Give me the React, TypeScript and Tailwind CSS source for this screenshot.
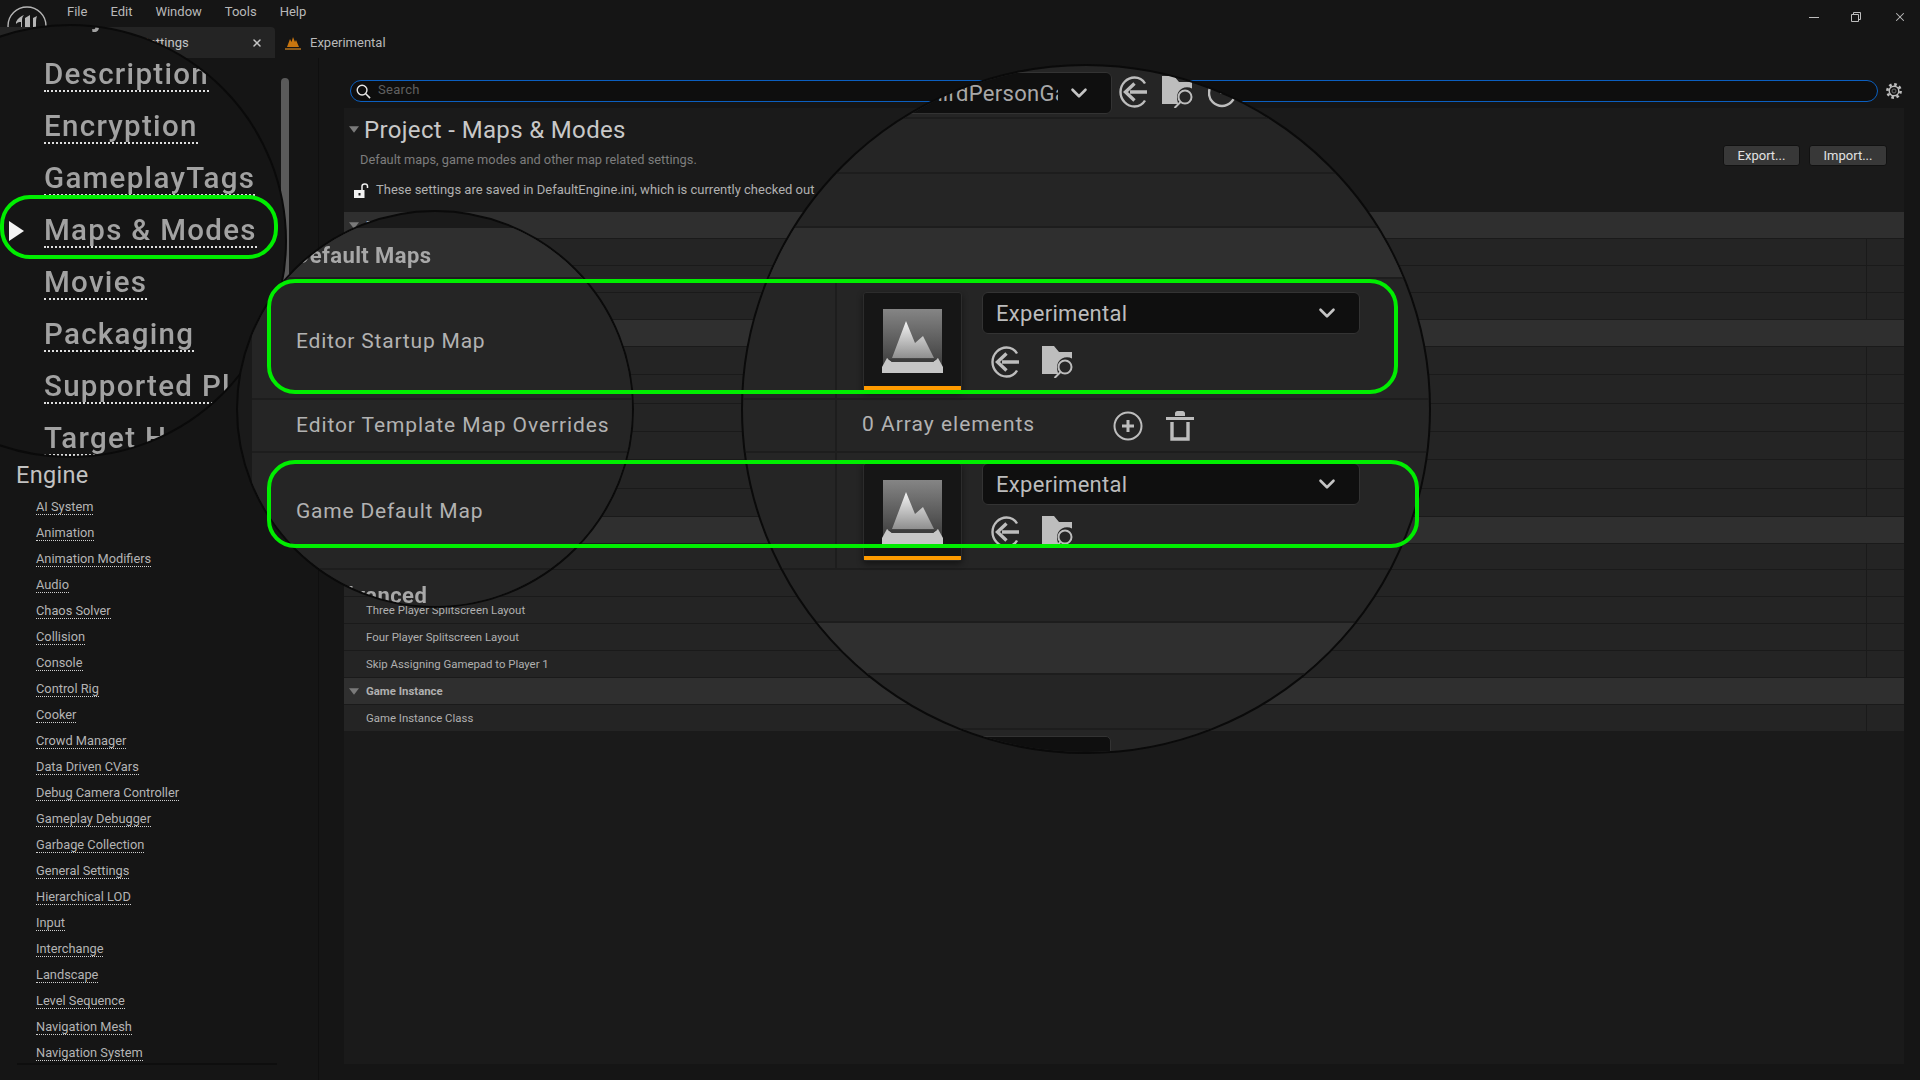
import { ChevronDown, X } from 'lucide-react';

const menus = ['File', 'Edit', 'Window', 'Tools', 'Help'];

const engineLinks = [
  'AI System', 'Animation', 'Animation Modifiers', 'Audio', 'Chaos Solver', 'Collision', 'Console', 'Control Rig',
  'Cooker', 'Crowd Manager', 'Data Driven CVars', 'Debug Camera Controller', 'Gameplay Debugger', 'Garbage Collection',
  'General Settings', 'Hierarchical LOD', 'Input', 'Interchange', 'Landscape', 'Level Sequence', 'Navigation Mesh',
  'Navigation System',
];

const zoomedLinks = ['Description', 'Encryption', 'GameplayTags', 'Maps & Modes', 'Movies', 'Packaging', 'Supported Platforms', 'Target Hardware'];

const rows = [
  { h: 'h-[27px]', label: 'Default Maps', header: true },
  { h: 'h-[27px]', label: '' },
  { h: 'h-[27px]', label: '' },
  { h: 'h-[27px]', label: '' },
  { h: 'h-[27px]', label: '', header: true },
  { h: 'h-[28px]', label: '' },
  { h: 'h-[29px]', label: '' },
  { h: 'h-[28px]', label: '' },
  { h: 'h-[28px]', label: '' },
  { h: 'h-[29px]', label: '' },
  { h: 'h-[28px]', label: '' },
  { h: 'h-[27px]', label: '', header: true },
  { h: 'h-[26px]', label: '' },
  { h: 'h-[27px]', label: '' },
  { h: 'h-[27px]', label: 'Three Player Splitscreen Layout' },
  { h: 'h-[27px]', label: 'Four Player Splitscreen Layout' },
  { h: 'h-[27px]', label: 'Skip Assigning Gamepad to Player 1' },
  { h: 'h-[27px]', label: 'Game Instance', header: true },
  { h: 'h-[27px]', label: 'Game Instance Class' },
];

function Caret({ className }: { className: string }) {
  return (
    <svg viewBox="0 0 12 8" className={className}>
      <path d="M0 0h12L6 8z" fill="#7a7a7a" />
    </svg>
  );
}

function UnrealLogo() {
  return (
    <svg viewBox="0 0 40 40" className="w-[40px] h-[40px]">
      <circle cx="20" cy="20" r="19" fill="none" stroke="#b5b5b5" strokeWidth="1.4" />
      <path d="M9 16c2-4 5-6 8-7-2 2-2 4-2 6v9c0 2 2 2 3 1V12l5-3v15c1 1 2 1 3 0V12l4-2c-1 3-1 5-1 8v9l-4 4-3-2-3 2-5-3v-12c-2 0-3 0-5 2z" fill="#b5b5b5" />
    </svg>
  );
}

function MapTabIcon() {
  return (
    <svg viewBox="0 0 16 14" className="w-[16px] h-[14px]">
      <path d="M2 11 5 3l1.5 3L8 1l2 5 1-2 3 7z" fill="#c9760f" />
      <path d="M0 12h16v2H0z" fill="#8a5a1c" />
    </svg>
  );
}

function LockIcon() {
  return (
    <svg viewBox="0 0 15 15" className="w-[15px] h-[15px]">
      <path d="M0 7h10.5v8H0z" fill="#f2f2f2" />
      <path d="M4.5 10h2v2.5h-2z" fill="#1a1a1a" />
      <path d="M8 7V3.2C8 1.8 9 1 10.8 1s2.7.8 2.7 2.2V5" fill="none" stroke="#f2f2f2" strokeWidth="1.5" />
    </svg>
  );
}

function GearIcon() {
  return (
    <svg viewBox="0 0 16 16" className="w-[16px] h-[16px]">
      <circle cx="8" cy="8" r="6.6" fill="none" stroke="#bdbdbd" strokeWidth="2.6" strokeDasharray="2.6 2.58" />
      <circle cx="8" cy="8" r="4.8" fill="none" stroke="#bdbdbd" strokeWidth="1.4" />
      <circle cx="8" cy="8" r="2" fill="none" stroke="#6a6a6a" strokeWidth="1" />
    </svg>
  );
}

function SearchIcon() {
  return (
    <svg viewBox="0 0 16 16" className="w-[15px] h-[15px]">
      <circle cx="6.5" cy="6.5" r="5.2" fill="none" stroke="#e6e6e6" strokeWidth="1.5" />
      <path d="m10.4 10.4 4.6 4.6" stroke="#e6e6e6" strokeWidth="1.7" />
    </svg>
  );
}

function BackIcon() {
  return (
    <svg viewBox="0 0 29 32" className="w-[29px] h-[32px] shrink-0">
      <path d="M26 7.5C23.6 3.5 19.6 1.5 15.5 1.5 8 1.5 1.5 8 1.5 16s6.500 14.500 14 14.500c4.100 0 8.100-2 10.500-6" fill="none" stroke="#bdbdbd" strokeWidth="2.400" />
      <path d="M28 16H11" stroke="#bdbdbd" strokeWidth="3.400" />
      <path d="M15.500 7.500 6.500 16l9 8.500" fill="none" stroke="#bdbdbd" strokeWidth="3.400" />
    </svg>
  );
}

function FolderSearchIcon() {
  return (
    <svg viewBox="0 0 32 32" className="w-[32px] h-[32px] shrink-0">
      <path d="M0 0h12l5 6h13v6.500a10 10 0 0 0-15 8.500c0 2.500.5 5 1.500 7H0z" fill="#bdbdbd" />
      <circle cx="23" cy="21" r="6.500" fill="none" stroke="#bdbdbd" strokeWidth="2" />
      <path d="m18.500 26-6 6" stroke="#bdbdbd" strokeWidth="2" />
    </svg>
  );
}

function ResetIcon() {
  return (
    <svg viewBox="0 0 28 32" className="w-[28px] h-[32px] shrink-0">
      <circle cx="14" cy="17" r="13" fill="none" stroke="#bdbdbd" strokeWidth="2.400" />
      <path d="M14 10v8" stroke="#bdbdbd" strokeWidth="3" />
    </svg>
  );
}

function PlusCircleIcon() {
  return (
    <svg viewBox="0 0 30 30" className="w-[30px] h-[30px]">
      <circle cx="15" cy="15" r="13.500" fill="none" stroke="#bdbdbd" strokeWidth="2" />
      <path d="M15 9v12M9 15h12" stroke="#bdbdbd" strokeWidth="3" />
    </svg>
  );
}

function TrashIcon() {
  return (
    <svg viewBox="0 0 28 30" className="w-[28px] h-[30px]">
      <path d="M0 6h28v3H0zM9 2.500C9 1 10 0 11.500 0h5C18 0 19 1 19 2.500V5H9z" fill="#bdbdbd" />
      <path d="M6 11v17h16V11" fill="none" stroke="#bdbdbd" strokeWidth="3.400" />
    </svg>
  );
}

function MapThumb({ id, height }: { id: string; height: string }) {
  return (
    <div className={`relative w-[99px] ${height} shrink-0 bg-[#161616] rounded-[3px] border border-[#2c2c2c] shadow-[0_3px_6px_rgba(0,0,0,0.45)] flex justify-center pt-[16px]`}>
      <svg viewBox="0 0 61 64" className="w-[61px] h-[64px]">
        <defs>
          <linearGradient id={`${id}-sky`} x1="0" y1="0" x2="0" y2="1">
            <stop offset="0" stopColor="#858585" />
            <stop offset="1" stopColor="#3c3c3c" />
          </linearGradient>
          <linearGradient id={`${id}-peak`} x1="0" y1="0" x2="0" y2="1">
            <stop offset="0" stopColor="#f5f5f5" />
            <stop offset="1" stopColor="#8f8f8f" />
          </linearGradient>
        </defs>
        <path d="M1 0h59v58H1z" fill={`url(#${id}-sky)`} />
        <path d="M10 49 24 12l9 22 8-7 11 22z" fill={`url(#${id}-peak)`} />
        <path d="M0 58 5 49l5 4h41l5-4 5 9v6H0z" fill="#c6c6c6" />
        <path d="M6 50h49l-4 3H10z" fill="#3c3c3c" />
      </svg>
      <div className="absolute left-0 right-0 bottom-0 h-[4px] bg-[#ff9b00]" />
    </div>
  );
}

function MapDropdown({ width, text, textClass }: { width: string; text: string; textClass: string }) {
  return (
    <div className={`${width} h-[42px] shrink-0 bg-[#0f0f0f] rounded-[6px] border border-[#333333] flex items-center justify-between pr-[22px] overflow-hidden`}>
      <span className={`text-[22px] whitespace-nowrap ${textClass}`}>{text}</span>
      <ChevronDown className="w-[26px] h-[26px] text-[#c4c4c4] shrink-0 mr-[-3px]" strokeWidth={2.4} />
    </div>
  );
}

function MapPicker({ id, height, iconGap }: { id: string; height: string; iconGap: string }) {
  return (
    <div className="flex gap-[20px]">
      <MapThumb id={id} height={height} />
      <div className="flex flex-col">
        <MapDropdown width="w-[378px]" text="Experimental" textClass="pl-[13px] tracking-[0.3px] text-[#bcbcbc]" />
        <div className={`flex ${iconGap} pl-[9px] gap-[22px]`}>
          <BackIcon />
          <FolderSearchIcon />
        </div>
      </div>
    </div>
  );
}

// the three magnified call-outs sit on top of the settings page
function SidebarLens() {
  return (
    <div className="absolute left-[-147px] top-[24px] w-[434px] h-[434px] rounded-full overflow-hidden bg-[#151515] border-2 border-[#0a0a0a]">
      <div className="absolute left-[189px] top-[-34px] flex flex-col w-[400px]">
        <div className="h-[57px] pt-[8px]">
          <span className="text-[29.5px] font-medium leading-[32px] tracking-[1.3px] text-[#a2a2a2] blur-[0.5px]">Project</span>
        </div>
        {zoomedLinks.map((link) => (
          <div key={link} className="relative h-[52px] flex items-center">
            {link === 'Maps & Modes' && (
              <svg viewBox="0 0 15 20" className="absolute left-[-35px] top-[16px] w-[15px] h-[20px]">
                <path d="M0 0l15 10L0 20z" fill="#f4f4f4" />
              </svg>
            )}
            <span className="text-[29.5px] font-medium leading-[32px] tracking-[1.3px] text-[#a2a2a2] whitespace-nowrap border-b-2 border-dotted border-[#dedede] blur-[0.5px]">
              {link}
            </span>
          </div>
        ))}
      </div>
    </div>
  );
}

function LeftLens() {
  return (
    <div className="absolute left-[236px] top-[210px] w-[398px] h-[398px] rounded-full overflow-hidden bg-[#1a1a1a] border-2 border-[#0a0a0a]">
      <div className="ml-[14px] mt-[16px] w-[400px] flex flex-col bg-[#252525] text-[#b2b2b2]">
        <div className="h-[51px] flex items-center pl-[43px] pt-[5px] bg-[#2f2f2f] border-b-2 border-[#1d1d1d]">
          <span className="text-[22px] font-bold tracking-[0.4px] text-[#a8a8a8] blur-[0.4px]">Default Maps</span>
        </div>
        <div className="h-[121px] flex items-center pl-[44px] border-b-2 border-[#1d1d1d] pt-[7px]">
          <span className="text-[21px] tracking-[0.8px]">Editor Startup Map</span>
        </div>
        <div className="h-[53px] flex items-center pl-[44px] border-b-2 border-[#1d1d1d]">
          <span className="text-[21px] tracking-[0.9px] whitespace-nowrap">Editor Template Map Overrides</span>
        </div>
        <div className="h-[117px] flex items-center pl-[44px] border-b-2 border-[#1d1d1d] pt-[2px]">
          <span className="text-[21px] tracking-[0.8px]">Game Default Map</span>
        </div>
        <div className="h-[50px] flex items-center pl-[74px]">
          <span className="text-[22px] font-bold tracking-[0.4px] text-[#a8a8a8] blur-[0.4px]">Advanced</span>
        </div>
      </div>
    </div>
  );
}

function RightLens() {
  return (
    <div className="absolute left-[741px] top-[64px] w-[690px] h-[690px] rounded-full overflow-hidden bg-[#252525] border-2 border-[#0a0a0a]">
      <div className="flex flex-col w-[690px]">
        <div className="h-[53px] flex items-start pt-[6px] border-b-2 border-[#1d1d1d] justify-end pr-[198px] gap-[14px]">
          <div className="mr-[-7px]">
            <MapDropdown width="w-[300px]" text="ThirdPersonGameMode" textClass="w-[245px] shrink-0 overflow-hidden text-[#a8a8a8] tracking-[0.3px] pl-[104px]" />
          </div>
          <div className="flex gap-[14px] mr-[-1px] pt-[4px]">
            <BackIcon />
            <FolderSearchIcon />
            <ResetIcon />
          </div>
        </div>
        <div className="h-[55px] border-b-2 border-[#1d1d1d]" />
        <div className="h-[54px] border-b-2 border-[#1d1d1d]" />
        <div className="h-[51px] bg-[#2f2f2f] border-b-2 border-[#1d1d1d]" />
        <div className="h-[121px] flex border-b-2 border-[#1d1d1d]">
          <div className="w-[94px] border-r-2 border-[#1d1d1d]" />
          <div className="pl-[26px] pt-[13px]">
            <MapPicker id="startup" height="h-[99px]" iconGap="mt-[12px]" />
          </div>
        </div>
        <div className="h-[53px] flex border-b-2 border-[#1d1d1d]">
          <div className="w-[94px] border-r-2 border-[#1d1d1d]" />
          <div className="pl-[25px] flex items-center">
            <span className="text-[21px] tracking-[1px] text-[#b2b2b2] w-[251px] whitespace-nowrap mt-[-2px]">0 Array elements</span>
            <PlusCircleIcon />
            <div className="ml-[23px]">
              <TrashIcon />
            </div>
          </div>
        </div>
        <div className="h-[117px] flex border-b-2 border-[#1d1d1d]">
          <div className="w-[94px] border-r-2 border-[#1d1d1d]" />
          <div className="pl-[26px] pt-[10px]">
            <MapPicker id="game" height="h-[98px]" iconGap="mt-[11px]" />
          </div>
        </div>
        <div className="h-[53px] border-b-2 border-[#1d1d1d]" />
        <div className="h-[52px] bg-[#2f2f2f] border-b-2 border-[#1d1d1d]" />
        <div className="h-[55px] border-b-2 border-[#1d1d1d]" />
        <div className="h-[40px] pt-[6px] pl-[90px]">
          <div className="w-[278px] h-[40px] bg-[#0f0f0f] rounded-[5px] border border-[#333333]" />
        </div>
      </div>
    </div>
  );
}

export default function App() {
  return (
    <div className="relative w-[1920px] h-[1080px] overflow-hidden bg-[#151515] [font-family:Roboto,sans-serif] flex flex-col">
      {/* Title bar */}
      <div className="h-[27px] flex shrink-0">
        <div className="ml-[7px] mt-[6px]">
          <UnrealLogo />
        </div>
        <div className="ml-[20px] pt-[1px] flex gap-[23px] h-[23px] items-center text-[13px] text-[#b9b9b9]">
          {menus.map((menu) => (
            <span key={menu}>{menu}</span>
          ))}
        </div>
        <div className="ml-auto flex pr-[13px] items-start pt-[10px] gap-[32px]">
          <div className="w-[10px] h-[14px] flex items-center">
            <div className="w-[10px] h-px bg-[#bdbdbd]" />
          </div>
          <svg viewBox="0 0 10 10" className="w-[10px] h-[10px] mt-[2px]">
            <path d="M.5 2.500h7v7h-7zM2.500 2.500v-2h7v7h-2" fill="none" stroke="#bdbdbd" />
          </svg>
          <X className="w-[14px] h-[14px] text-[#bdbdbd]" strokeWidth={1.8} />
        </div>
      </div>

      {/* Tabs */}
      <div className="h-[31px] flex shrink-0">
        <div className="w-[275px] bg-[#242424] rounded-tr-[4px] flex items-center justify-between pl-[97px] pr-[12px]">
          <span className="text-[13px] text-[#c4c4c4]">Project Settings</span>
          <X className="w-[12px] h-[12px] text-[#c4c4c4]" strokeWidth={3} />
        </div>
        <div className="flex items-center pl-[10px] gap-[9px]">
          <MapTabIcon />
          <span className="text-[13px] text-[#b9b9b9]">Experimental</span>
        </div>
      </div>

      <div className="flex flex-1 min-h-0">
        {/* Sidebar */}
        <aside className="relative w-[319px] shrink-0 border-r border-[#0f0f0f] pl-[16px]">
          <div className="absolute left-[281px] top-[20px] w-[8px] h-[260px] rounded-full bg-[#5a5a5a]" />
          <h2 className="pt-[403px] text-[23.5px] leading-[28px] tracking-[0.3px] text-[#c2c2c2]">Engine</h2>
          <div className="mt-[5px] pl-[20px] flex flex-col items-start">
            {engineLinks.map((link) => (
              <div key={link} className="h-[26px] flex items-center">
                <span className="text-[12.8px] leading-[15px] text-[#b4b4b4] border-b border-dotted border-[#d0d0d0] whitespace-nowrap">
                  {link}
                </span>
              </div>
            ))}
          </div>
          <div className="absolute left-[17px] top-[1005px] w-[260px] h-[2px] bg-[#0e0e0e]" />
        </aside>

        {/* Settings page */}
        <main className="flex-1 min-w-0 pl-[25px] pr-[16px] flex flex-col pb-[16px]">
          <div className="h-[50px] flex pt-[22px] shrink-0">
            <div className="ml-[6px] w-[1528px] h-[22px] rounded-full border-[1.5px] border-[#0b5fc0] bg-[#0e0e0e] flex items-center pl-[5px] gap-[7px]">
              <SearchIcon />
              <span className="text-[13px] leading-[16px] mb-[2px] text-[#606060] tracking-[0.3px]">Search</span>
            </div>
            <div className="ml-[8px] pt-[3px]">
              <GearIcon />
            </div>
          </div>

          <div className="flex-1 bg-[#1a1a1a] flex flex-col">
            <div className="h-[104px] shrink-0 flex justify-between">
              <div className="flex flex-col">
                <div className="flex items-center h-[42px] pt-[1px]">
                  <Caret className="ml-[5px] w-[10px] h-[7px]" />
                  <span className="ml-[5px] text-[24px] tracking-[0.35px] text-[#c8c8c8]">Project - Maps &amp; Modes</span>
                </div>
                <span className="ml-[16px] text-[12.8px] leading-[18px] mt-[1px] text-[#7d7d7d]">
                  Default maps, game modes and other map related settings.
                </span>
                <div className="flex items-center mt-[12px] h-[18px] ml-[10px] gap-[7px]">
                  <LockIcon />
                  <span className="text-[13px] text-[#b0b0b0]">
                    These settings are saved in DefaultEngine.ini, which is currently checked out
                  </span>
                </div>
              </div>
              <div className="flex gap-[9px] pt-[37px] pr-[17px]">
                <button className="w-[77px] h-[21px] rounded-[3px] bg-[#383838] border border-[#111111] text-[13px] leading-none text-[#e2e2e2]">Export...</button>
                <button className="w-[78px] h-[21px] rounded-[3px] bg-[#383838] border border-[#111111] text-[13px] leading-none text-[#e2e2e2]">Import...</button>
              </div>
            </div>

            <div className="flex flex-col">
              {rows.map((row, i) => (
                <div
                  key={i}
                  className={`${row.h} flex border-b border-[#1a1a1a] ${row.header ? 'bg-[#2f2f2f]' : 'bg-[#242424]'}`}
                >
                  <div className="flex-1 flex items-center min-w-0 pt-[1px]">
                    {row.header ? <Caret className="ml-[5px] w-[10px] h-[7px]" /> : <div className="ml-[5px] w-[10px]" />}
                    <span className={`ml-[7px] text-[11.4px] text-[#b0b0b0] ${row.header ? 'font-bold' : ''}`}>{row.label}</span>
                  </div>
                  {row.label === 'Game Instance' && (
                    <div className="mr-[970px] mt-[7px] w-[14px] h-[14px] rounded-[3px] border border-[#1a1a1a]" />
                  )}
                  {!row.header && <div className="w-[38px] border-l border-[#1a1a1a]" />}
                </div>
              ))}
            </div>
          </div>
        </main>
      </div>

      <SidebarLens />
      <LeftLens />
      <RightLens />

      {/* Green highlights */}
      <div className="absolute left-0 top-[195px] w-[278px] h-[64px] rounded-[30px] border-4 border-[#00ee00]" />
      <div className="absolute left-[267px] top-[279px] w-[1131px] h-[115px] rounded-[28px] border-4 border-[#00ee00]" />
      <div className="absolute left-[267px] top-[460px] w-[1152px] h-[88px] rounded-[28px] border-4 border-[#00ee00]" />
    </div>
  );
}
